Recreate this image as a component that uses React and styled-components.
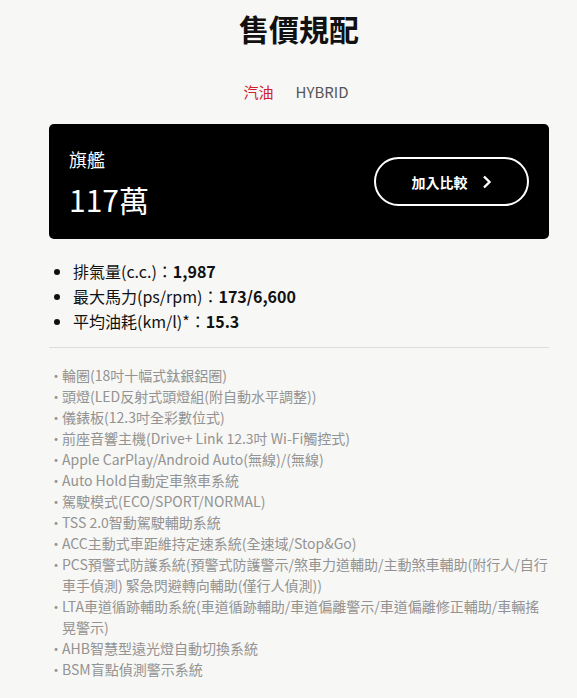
import React from "react";
import styled, { createGlobalStyle } from "styled-components";

const GlobalStyle = createGlobalStyle`
  body {
    margin: 0;
    background: #f7f7f5;
    font-family: "Noto Sans CJK TC", "Noto Sans", sans-serif;
    color: #111;
  }
`;

const Page = styled.div`
  width: 500px;
  margin-left: 49px;
  padding-top: 6px;
`;

const Title = styled.h2`
  margin: 0;
  text-align: center;
  font-size: 30px;
  font-weight: 700;
  line-height: 44px;
  color: #111;
`;

const Tabs = styled.div`
  display: flex;
  justify-content: center;
  gap: 22px;
  margin-top: 30px;
  padding-right: 6px;
`;

const Tab = styled.span`
  font-size: 15px;
  line-height: 24px;
  color: ${(p) => (p.$active ? "#d0202f" : "#555")};
`;

const Card = styled.div`
  margin-top: 20px;
  background: #000;
  border-radius: 5px;
  height: 115px;
  padding: 0 20px;
  box-sizing: border-box;
  display: flex;
  align-items: center;
  justify-content: space-between;
`;

const CardInfo = styled.div`
  display: flex;
  flex-direction: column;
  gap: 10px;
  color: #fff;
`;

const Grade = styled.div`
  font-size: 18px;
  line-height: 24px;
`;

const Price = styled.div`
  font-size: 30px;
  line-height: 36px;
`;

const CompareButton = styled.button`
  width: 155px;
  height: 49px;
  border: 2px solid #fff;
  border-radius: 25px;
  background: transparent;
  color: #fff;
  font-family: inherit;
  font-size: 14px;
  font-weight: 700;
  display: flex;
  align-items: center;
  justify-content: center;
  gap: 14px;
  padding: 0;
`;

const SpecList = styled.ul`
  margin: 20px 0 0;
  padding: 0 0 0 24px;
  list-style: disc;
`;

const Spec = styled.li`
  font-size: 16px;
  line-height: 25px;
  color: #111;
  b {
    font-weight: 700;
  }
`;

const Divider = styled.hr`
  margin: 13px 0 0;
  border: none;
  border-top: 1px solid #ddd;
`;

const FeatureList = styled.ul`
  margin: 17px 0 0;
  padding: 0;
  list-style: none;
`;

const Feature = styled.li`
  position: relative;
  padding-left: 13px;
  font-size: 14px;
  line-height: 21px;
  color: #939393;
  &::before {
    content: "·";
    position: absolute;
    left: 0;
    top: 0;
  }
`;

const features = [
  "輪圈(18吋十幅式鈦銀鋁圈)",
  "頭燈(LED反射式頭燈組(附自動水平調整))",
  "儀錶板(12.3吋全彩數位式)",
  "前座音響主機(Drive+ Link 12.3吋 Wi-Fi觸控式)",
  "Apple CarPlay/Android Auto(無線)/(無線)",
  "Auto Hold自動定車煞車系統",
  "駕駛模式(ECO/SPORT/NORMAL)",
  "TSS 2.0智動駕駛輔助系統",
  "ACC主動式車距維持定速系統(全速域/Stop&Go)",
  "PCS預警式防護系統(預警式防護警示/煞車力道輔助/主動煞車輔助(附行人/自行車手偵測) 緊急閃避轉向輔助(僅行人偵測))",
  "LTA車道循跡輔助系統(車道循跡輔助/車道偏離警示/車道偏離修正輔助/車輛搖晃警示)",
  "AHB智慧型遠光燈自動切換系統",
  "BSM盲點偵測警示系統",
];

const Chevron = () => (
  <svg width="10" height="14" viewBox="0 0 10 14" fill="none">
    <path d="M2 1.5 L7.5 7 L2 12.5" stroke="#fff" strokeWidth="2.4" />
  </svg>
);

const App = () => {
  return (
    <Page>
      <GlobalStyle />
      <Title>售價規配</Title>
      <Tabs>
        <Tab $active>汽油</Tab>
        <Tab>HYBRID</Tab>
      </Tabs>

      <Card>
        <CardInfo>
          <Grade>旗艦</Grade>
          <Price>117萬</Price>
        </CardInfo>
        <CompareButton>
          加入比較
          <Chevron />
        </CompareButton>
      </Card>

      <SpecList>
        <Spec>
          排氣量(c.c.)：<b>1,987</b>
        </Spec>
        <Spec>
          最大馬力(ps/rpm)：<b>173/6,600</b>
        </Spec>
        <Spec>
          平均油耗(km/l)*：<b>15.3</b>
        </Spec>
      </SpecList>

      <Divider />

      <FeatureList>
        {features.map((f) => (
          <Feature key={f}>{f}</Feature>
        ))}
      </FeatureList>
    </Page>
  );
};

export default App;
